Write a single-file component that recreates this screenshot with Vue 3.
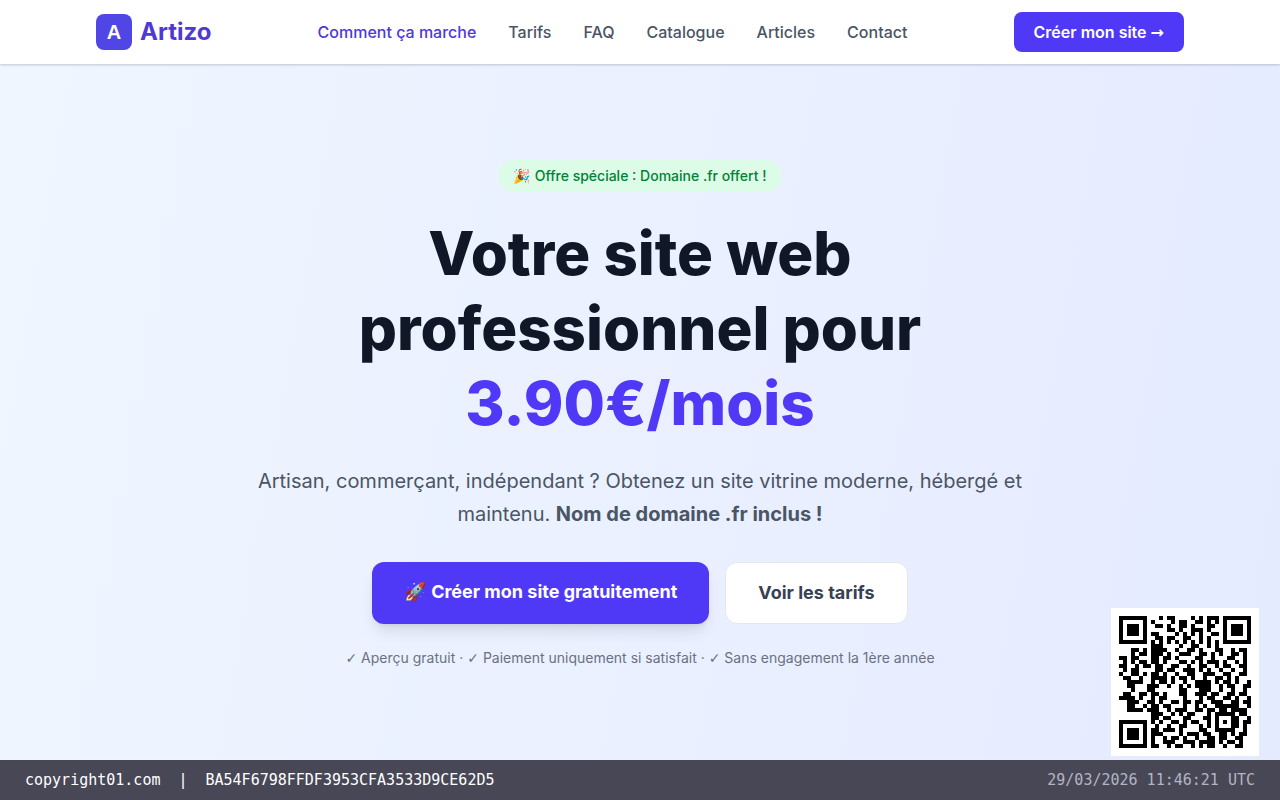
<script setup>
const links = [
  { label: 'Comment ça marche', href: '#comment', active: true },
  { label: 'Tarifs', href: '#tarifs' },
  { label: 'FAQ', href: '#faq' },
  { label: 'Catalogue', href: '#catalogue' },
  { label: 'Articles', href: '#articles' },
  { label: 'Contact', href: '#contact' },
]

const qrRows = [
  '#######...#.##....#.#.###.#######',
  '#.....#.#....#.##..##.#.#.#.....#',
  '#.###.#..##.#..##.#...##..#.###.#',
  '#.###.#.....##.#..###.#...#.###.#',
  '#.###.#.##....#.#.#.#..##.#.###.#',
  '#.....#..##.##..##..#.#...#.....#',
  '#######.#.#.#.#.#.#.#.#.#.#######',
  '........###....#..##..#.#........',
  '...##.#.####..#..##.#...##..#.##.',
  '...#.##.###.#..###..##.#.#..##.#.',
  '##.##...##.##.#....##..#...##..#.',
  '.#.#.##.##.#...##.#.#.###.#..#.#.',
  '##..#.##.##..##..#..##..#.##..##.',
  '.#.##....##.##..###.#.#..#..#..#.',
  '#..##.#.##.#..#..##..###..##..##.',
  '.##..#..####.#.##.#..#..##.#.#...',
  '..####..#.##.#..#..####.#.##.#..#',
  '..##...###..#..#.#.####..#.##..##',
  '...#...##......##...###..#..#..#.',
  '.##..##.##.#...##..###.##..##.##.',
  '####.#..#.##....#...#.##..##.#..#',
  '..###..##.#..##.##.##..###..##.##',
  '..##..#.##.##...#..#.#..######..#',
  '..####.###..#.###..##.##.##.####.',
  '........###..#.#.##...#.#####.##.',
  '#######.##.##...##...##.#...##..#',
  '#.....#.#.#..##.#.##..#.#.#.##.##',
  '#.###.#..#..#..##...#.#.#...##.#.',
  '#.###.#.##.###.#....##..#####..#.',
  '#.###.#.###....#.###.##..##.#.##.',
  '#.....#.#..#.##.#..#..##.##..##..',
  '#######.#..###..###.####.#.##.#..',
  '.........................###.....',
]
qrRows[32] = '#######.##..#.##..#.#.##..#..##..'

// Finder corners occupy 7 rows at the bottom left.
const finder = ['#######', '#.....#', '#.###.#', '#.###.#', '#.###.#', '#.....#', '#######']
finder.forEach((bits, i) => {
  qrRows[26 + i] = bits + '.' + qrRows[26 + i].slice(8)
})
qrRows[25] = '........' + qrRows[25].slice(8)

const qrPath = qrRows
  .map((row, y) => [...row].map((c, x) => (c === '#' ? `M${x} ${y}h1v1h-1z` : '')).join(''))
  .join('')
</script>

<template>
  <div class="page">
    <header class="header">
      <div class="bar">
        <a class="brand" href="#accueil"><span class="mark">A</span>Artizo</a>
        <nav class="nav">
          <a v-for="l in links" :key="l.label" :href="l.href" :class="{ active: l.active }">{{ l.label }}</a>
        </nav>
        <a class="cta" href="#creer">Créer mon site <span class="symbol">→</span></a>
      </div>
    </header>
    <main class="hero">
      <span class="badge">🎉 Offre spéciale : Domaine .fr offert !</span>
      <h1>Votre site web professionnel pour <span>3.90€/mois</span></h1>
      <p class="lead">
        Artisan, commerçant, indépendant ? Obtenez un site vitrine moderne, hébergé et maintenu.
        <strong>Nom de domaine .fr inclus !</strong>
      </p>
      <div class="actions">
        <a class="primary" href="#creer">🚀 Créer mon site gratuitement</a>
        <a class="secondary" href="#tarifs">Voir les tarifs</a>
      </div>
      <p class="note">
        <span class="symbol">✓</span> Aperçu gratuit · <span class="symbol">✓</span> Paiement uniquement si satisfait ·
        <span class="symbol">✓</span> Sans engagement la 1ère année
      </p>
    </main>
    <footer class="stamp">
      <div class="proof">
        <span>copyright01.com</span>
        <span>|</span>
        <span>BA54F6798FFDF3953CFA3533D9CE62D5</span>
      </div>
      <time datetime="2026-03-29T11:46:21Z">29/03/2026 11:46:21 UTC</time>
      <svg class="qr" viewBox="-2 -2 37 37" shape-rendering="crispEdges" role="img" aria-label="QR code">
        <path :d="qrPath" />
      </svg>
    </footer>
  </div>
</template>

<style>
body {
  margin: 0;
}
</style>

<style scoped>
.page {
  min-height: 100vh;
  display: flex;
  flex-direction: column;
  font-family: Inter, "Noto Color Emoji", sans-serif;
  font-size: 16px;
  line-height: 24px;
  color: #4a5565;
}
a {
  text-decoration: none;
  color: inherit;
}
.header {
  position: relative;
  background: #fff;
  box-shadow: 0 1px 3px rgba(0, 0, 0, 0.1), 0 1px 2px rgba(0, 0, 0, 0.1);
}
.bar {
  box-sizing: border-box;
  max-width: 1152px;
  min-height: 64px;
  margin: 0 auto;
  padding: 0 32px;
  display: flex;
  align-items: center;
  justify-content: space-between;
}
.brand {
  display: flex;
  align-items: center;
  gap: 8px;
  font-size: 24px;
  line-height: 32px;
  font-weight: 700;
  color: #4f39d6;
}
.mark {
  width: 36px;
  height: 36px;
  border-radius: 8px;
  background: #4f46e5;
  color: #fff;
  font: 700 20px/36px "Liberation Sans", sans-serif;
  text-align: center;
}
.nav {
  display: flex;
  gap: 32px;
  font-weight: 500;
}
.nav .active {
  color: #4f39d6;
}
.cta {
  padding: 8px 20px;
  border-radius: 8px;
  background: #4f39f6;
  color: #fff;
  font-weight: 600;
}
.symbol {
  font-family: "DejaVu Sans", sans-serif;
  line-height: 1;
}
.hero {
  flex: 1;
  padding: 96px 32px 80px;
  display: flex;
  flex-direction: column;
  align-items: center;
  text-align: center;
  background: linear-gradient(100deg, #eff6ff, #e5ebff);
}
.badge {
  padding: 6px 16px;
  border-radius: 16px;
  background: #dcfce7;
  color: #008236;
  font-size: 14px;
  line-height: 20px;
  font-weight: 500;
}
h1 {
  max-width: 832px;
  margin: 24px 0;
  font-size: 60px;
  line-height: 75px;
  font-weight: 800;
  color: #101828;
}
h1 span {
  color: #4f39f6;
}
.lead {
  max-width: 768px;
  margin: 0 0 31px;
  font-size: 20px;
  line-height: 33px;
}
.actions {
  display: flex;
  gap: 16px;
  font-size: 18px;
  line-height: 28px;
}
.primary,
.secondary {
  padding: 16px 32px;
  border-radius: 12px;
  font-weight: 700;
}
.primary {
  background: #4f39f6;
  color: #fff;
  box-shadow: 0 10px 15px -3px rgba(0, 0, 0, 0.1), 0 4px 6px -4px rgba(0, 0, 0, 0.1);
}
.secondary {
  border: 1px solid #e5e7eb;
  background: #fff;
  color: #364153;
}
.note {
  margin: 24px 0 0;
  font-size: 14px;
  line-height: 20px;
  color: #6a7282;
}
.stamp {
  position: relative;
  display: flex;
  justify-content: space-between;
  padding: 10px 25px;
  background: #474756;
  color: #fff;
  font-family: "DejaVu Sans Mono", monospace;
  font-size: 15px;
  line-height: 20px;
}
.proof {
  display: flex;
  gap: 18px;
}
.stamp time {
  color: #b4b4c4;
}
.qr {
  position: absolute;
  right: 21px;
  bottom: 44px;
  width: 148px;
  height: 148px;
  background: #fff;
}
</style>
